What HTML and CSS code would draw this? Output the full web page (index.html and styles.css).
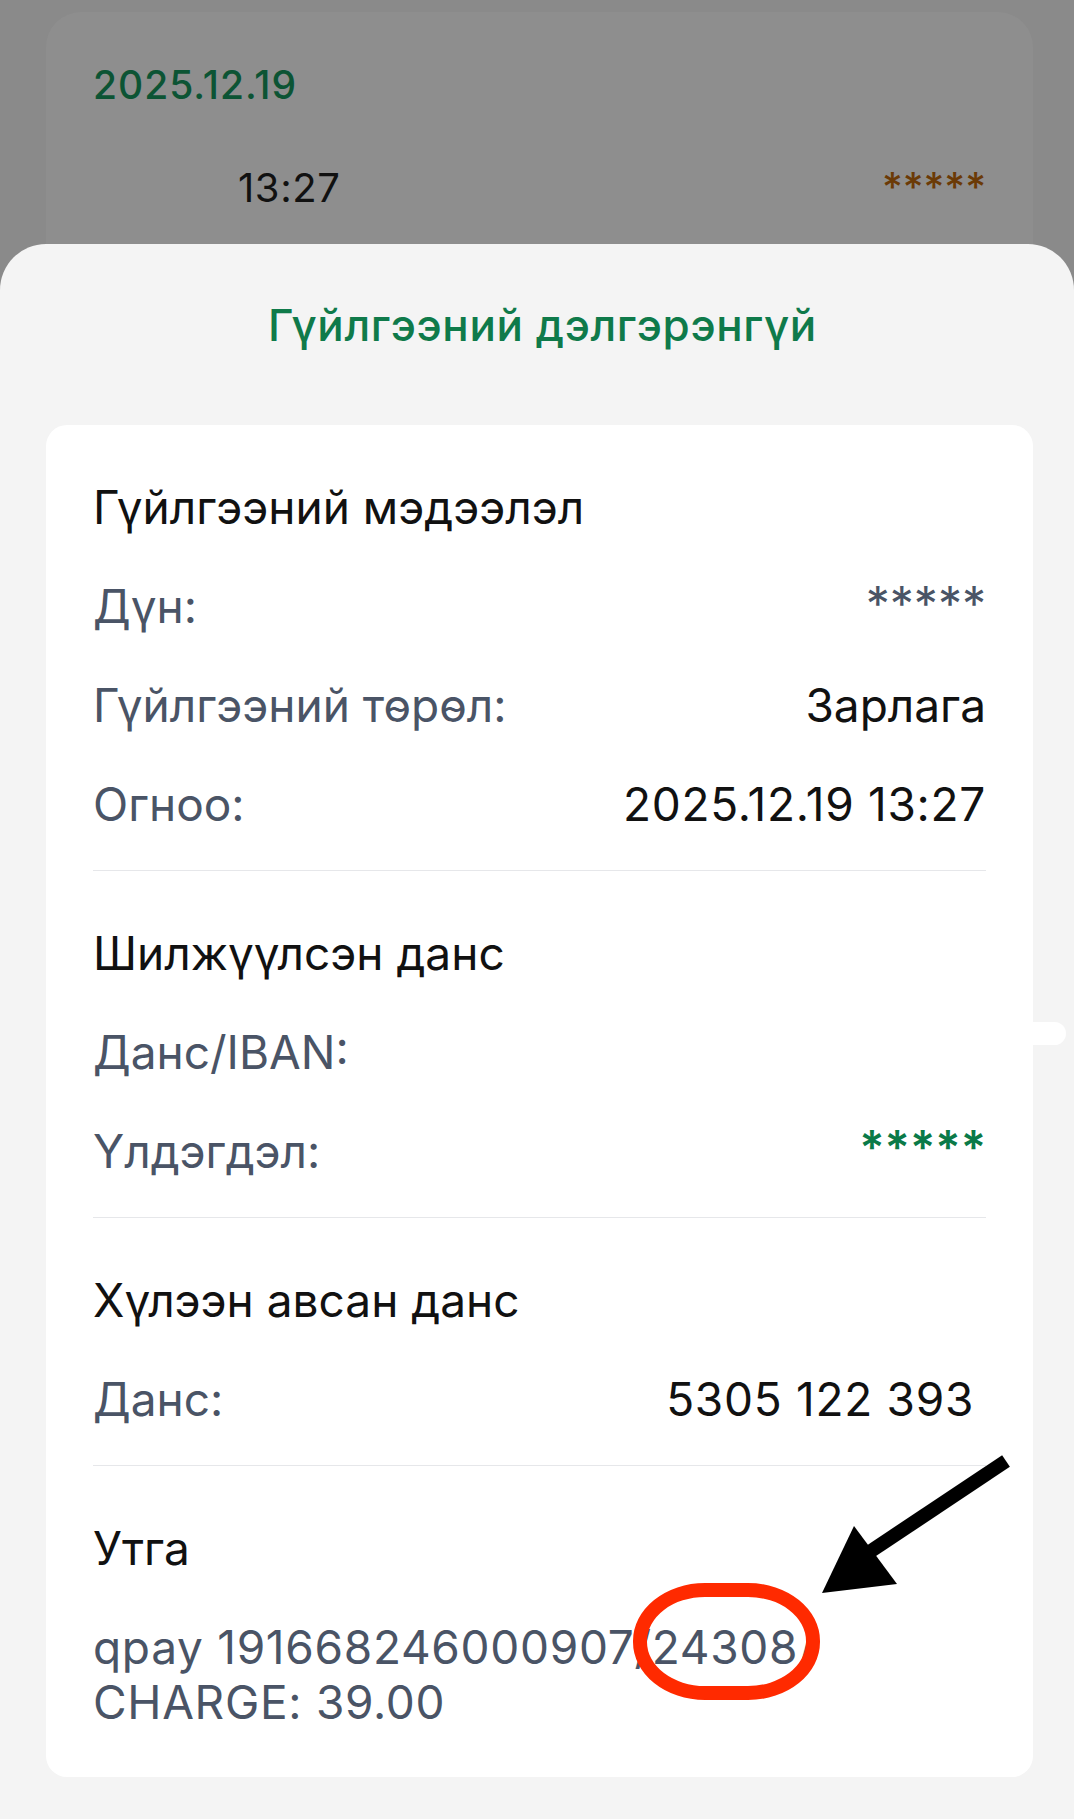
FILE: index.html
```html
<!DOCTYPE html>
<html lang="mn">
<head>
<meta charset="utf-8">
<title>Гүйлгээний дэлгэрэнгүй</title>
<link rel="stylesheet" href="styles.css">
</head>
<body>
<div class="stage">
  <div class="top">
    <div class="top-card">
      <div class="top-date">2025.12.19</div>
      <div class="top-row">
        <span class="top-time">13:27</span>
        <span class="top-amount">*****</span>
      </div>
    </div>
  </div>

  <div class="sheet">
    <h1 class="sheet-title">Гүйлгээний дэлгэрэнгүй</h1>
    <div class="card">
      <section class="section">
        <div class="sec-title">Гүйлгээний мэдээлэл</div>
        <div class="row"><span class="label">Дүн:</span><span class="value masked">*****</span></div>
        <div class="row"><span class="label">Гүйлгээний төрөл:</span><span class="value">Зарлага</span></div>
        <div class="row"><span class="label">Огноо:</span><span class="value num">2025.12.19 13:27</span></div>
      </section>
      <section class="section">
        <div class="sec-title">Шилжүүлсэн данс</div>
        <div class="row"><span class="label">Данс/IBAN:</span><span class="value"></span></div>
        <div class="row"><span class="label">Үлдэгдэл:</span><span class="value green">*****</span></div>
      </section>
      <section class="section">
        <div class="sec-title">Хүлээн авсан данс</div>
        <div class="row"><span class="label">Данс:</span><span class="value num inset">5305 122 393</span></div>
      </section>
      <section class="section last">
        <div class="sec-title">Утга</div>
        <div class="memo">qpay 191668246000907/24308/<br>CHARGE: 39.00</div>
      </section>
    </div>
  </div>

  <div class="smear"></div>
  <div class="ring"></div>
  <svg class="arrow" width="1074" height="1819" viewBox="0 0 1074 1819" aria-hidden="true">
    <line x1="1006" y1="1461" x2="868" y2="1553" stroke="#000" stroke-width="14" stroke-linecap="butt"/>
    <polygon points="822,1593 854,1526 897,1584" fill="#000"/>
  </svg>
</div>
</body>
</html>
```

FILE: styles.css
```css
* { box-sizing: border-box; }

html, body {
  margin: 0;
  padding: 0;
  background: #8a8a8a;
}

body {
  font-family: Inter, "Noto Sans", "DejaVu Sans", sans-serif;
  color: #111111;
}

.stage {
  position: relative;
  width: 1074px;
  min-height: 1819px;
  overflow: hidden;
}

/* dimmed card behind the sheet */
.top {
  padding: 12px 41px 0 46px;
}

.top-card {
  height: 232px;
  background: #8e8e8e;
  border-radius: 35px 35px 0 0;
  padding: 49px 47px 0 47px;
}

.top-date {
  font-size: 39px;
  line-height: 48px;
  font-weight: 500;
  letter-spacing: 1px;
  color: #0c5434;
}

.top-row {
  margin-top: 55px;
  display: flex;
  justify-content: space-between;
  align-items: center;
  line-height: 48px;
}

.top-time {
  margin-left: 145px;
  font-size: 40px;
  letter-spacing: 0.6px;
  color: #111111;
}

.top-amount {
  font-size: 40px;
  font-weight: 500;
  color: #6b3a06;
  margin-top: -2px;
}

/* bottom sheet */
.sheet {
  background: #f4f4f4;
  border-radius: 46px 46px 0 0;
  padding: 53px 41px 42px 46px;
  min-height: 1575px;
}

.sheet-title {
  margin: 0 0 72px;
  text-align: center;
  font-size: 44px;
  line-height: 56px;
  font-weight: 500;
  letter-spacing: 0.6px;
  color: #0f7a4a;
  padding-left: 6px;
}

.card {
  background: #ffffff;
  border-radius: 21px;
  padding: 0 47px;
}

.section {
  padding: 54px 0 38px;
  border-bottom: 1px solid #e6e7ea;
}

.section.last {
  border-bottom: none;
  padding-bottom: 47px;
}

.sec-title {
  font-size: 46px;
  line-height: 56px;
  color: #111111;
}

.row {
  margin-top: 43px;
  display: flex;
  justify-content: space-between;
  align-items: center;
  font-size: 46px;
  line-height: 56px;
}

.label {
  color: #4a5466;
}

.value {
  color: #111111;
}

.value.num {
  letter-spacing: 0.7px;
}

.value.masked {
  color: #4a5466;
  font-size: 48px;
  margin-top: -4px;
}

.value.green {
  color: #0a7a48;
  font-weight: 600;
  font-size: 47px;
  margin-top: -8px;
}

.value.inset {
  padding-right: 12px;
}

.memo {
  margin-top: 44px;
  font-size: 46px;
  line-height: 55px;
  letter-spacing: 0.7px;
  color: #4a5466;
}

/* annotations over the screenshot */
.smear {
  position: absolute;
  left: 1030px;
  top: 1022px;
  width: 36px;
  height: 23px;
  background: #ffffff;
  border-radius: 0 12px 12px 0;
}

.ring {
  position: absolute;
  left: 633px;
  top: 1583px;
  width: 187px;
  height: 117px;
  border: 14px solid #ff2a00;
  border-radius: 72px / 58px;
}

.arrow {
  position: absolute;
  left: 0;
  top: 0;
  pointer-events: none;
}
```
